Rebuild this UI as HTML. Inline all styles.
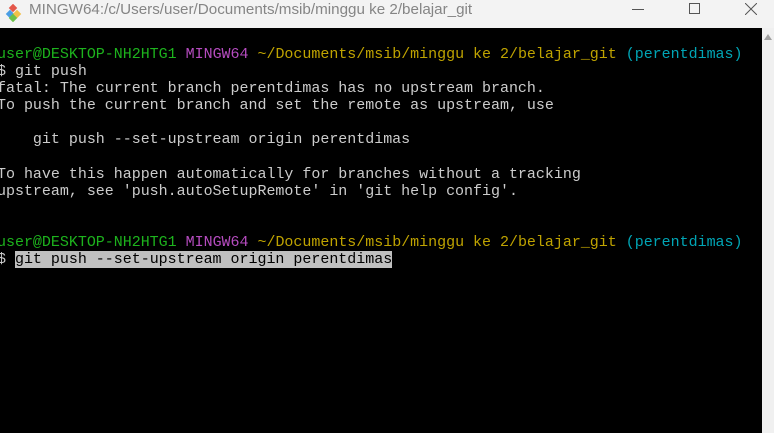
<!DOCTYPE html>
<html><head><meta charset="utf-8"><style>
*{margin:0;padding:0;box-sizing:border-box}
html,body{width:774px;height:433px;overflow:hidden;background:#000}
#title{position:absolute;left:0;top:0;width:774px;height:28px;background:#f3f3f3;font-family:"Liberation Sans",sans-serif;font-size:15.2px;color:#858585}
#title .t{position:absolute;left:29px;top:1px}
#term{position:absolute;left:0;top:28px;width:762px;height:405px;background:#000;overflow:hidden}
#sb{position:absolute;left:762px;top:28px;width:12px;height:405px;background:#f0f0f0}
pre{position:absolute;left:-3px;top:18px;font-family:"Liberation Mono",monospace;font-size:15px;letter-spacing:-0.02px;line-height:17.08px;color:#cccccc;white-space:pre}
.g{color:#1db31d}.m{color:#b64cc0}.y{color:#bfa300}.c{color:#00a5b5}
.sel{background:#c0c0c0;color:#000}
</style></head><body>
<div id="title">
<svg style="position:absolute;left:5px;top:4px" width="18" height="18" viewBox="0 0 18 18">
<rect x="5" y="1" width="6" height="6" transform="rotate(45 8 4)" fill="#e4574a"/>
<rect x="2" y="7" width="6" height="6" transform="rotate(45 5 10)" fill="#4a9ee4"/>
<rect x="9" y="7" width="6" height="6" transform="rotate(45 12 10)" fill="#f2c14a"/>
<rect x="5" y="11" width="6" height="6" transform="rotate(45 8 14)" fill="#6cc04a"/>
</svg>
<span class="t">MINGW64:/c/Users/user/Documents/msib/minggu ke 2/belajar_git</span>
<div style="position:absolute;left:632px;top:9px;width:12px;height:1px;background:#555"></div>
<div style="position:absolute;left:689px;top:3px;width:11px;height:11px;border:1px solid #555"></div>
<svg style="position:absolute;left:745px;top:3px" width="12" height="12"><path d="M0 0L12 12M12 0L0 12" stroke="#555" stroke-width="1"/></svg>
</div>
<div id="term"><pre><span class="g">user@DESKTOP-NH2HTG1</span> <span class="m">MINGW64</span> <span class="y">~/Documents/msib/minggu ke 2/belajar_git</span> <span class="c">(perentdimas)</span>
$ git push
fatal: The current branch perentdimas has no upstream branch.
To push the current branch and set the remote as upstream, use

    git push --set-upstream origin perentdimas

To have this happen automatically for branches without a tracking
upstream, see 'push.autoSetupRemote' in 'git help config'.


<span class="g">user@DESKTOP-NH2HTG1</span> <span class="m">MINGW64</span> <span class="y">~/Documents/msib/minggu ke 2/belajar_git</span> <span class="c">(perentdimas)</span>
$ <span class="sel">git push --set-upstream origin perentdimas</span></pre></div>
<div id="sb"><svg style="position:absolute;left:2px;top:6px" width="8" height="6"><path d="M0 6L4 0L8 6Z" fill="#a0a0a0"/></svg></div>
</body></html>
